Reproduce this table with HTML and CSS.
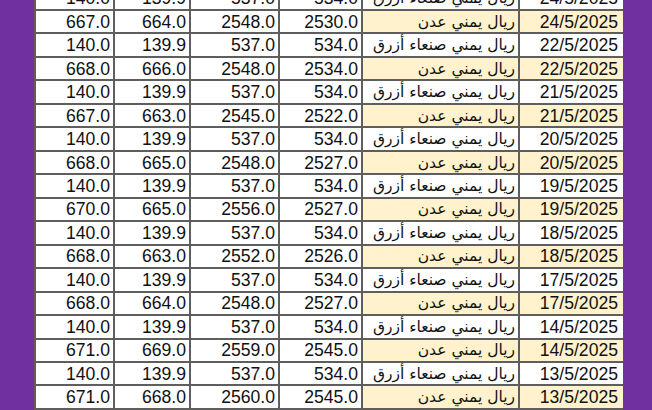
FILE: index.html
```html
<!DOCTYPE html>
<html lang="ar">
<head>
<meta charset="utf-8">
<link rel="stylesheet" href="styles.css">
</head>
<body>
<div class="frame">
  <div class="side side-left"></div>
  <div class="sheet">
    <table class="rates">
      <colgroup>
        <col class="c1"><col class="c2"><col class="c3"><col class="c4"><col class="c5"><col class="c6">
      </colgroup>
      <tbody>
        <tr class="san"><td>140.0</td><td>139.9</td><td>537.0</td><td>534.0</td><td class="name">ريال يمني صنعاء أزرق</td><td class="date">24/5/2025</td></tr>
        <tr class="aden"><td>667.0</td><td>664.0</td><td>2548.0</td><td>2530.0</td><td class="name">ريال يمني عدن</td><td class="date">24/5/2025</td></tr>
        <tr class="san"><td>140.0</td><td>139.9</td><td>537.0</td><td>534.0</td><td class="name">ريال يمني صنعاء أزرق</td><td class="date">22/5/2025</td></tr>
        <tr class="aden"><td>668.0</td><td>666.0</td><td>2548.0</td><td>2534.0</td><td class="name">ريال يمني عدن</td><td class="date">22/5/2025</td></tr>
        <tr class="san"><td>140.0</td><td>139.9</td><td>537.0</td><td>534.0</td><td class="name">ريال يمني صنعاء أزرق</td><td class="date">21/5/2025</td></tr>
        <tr class="aden"><td>667.0</td><td>663.0</td><td>2545.0</td><td>2522.0</td><td class="name">ريال يمني عدن</td><td class="date">21/5/2025</td></tr>
        <tr class="san"><td>140.0</td><td>139.9</td><td>537.0</td><td>534.0</td><td class="name">ريال يمني صنعاء أزرق</td><td class="date">20/5/2025</td></tr>
        <tr class="aden"><td>668.0</td><td>665.0</td><td>2548.0</td><td>2527.0</td><td class="name">ريال يمني عدن</td><td class="date">20/5/2025</td></tr>
        <tr class="san"><td>140.0</td><td>139.9</td><td>537.0</td><td>534.0</td><td class="name">ريال يمني صنعاء أزرق</td><td class="date">19/5/2025</td></tr>
        <tr class="aden"><td>670.0</td><td>665.0</td><td>2556.0</td><td>2527.0</td><td class="name">ريال يمني عدن</td><td class="date">19/5/2025</td></tr>
        <tr class="san"><td>140.0</td><td>139.9</td><td>537.0</td><td>534.0</td><td class="name">ريال يمني صنعاء أزرق</td><td class="date">18/5/2025</td></tr>
        <tr class="aden"><td>668.0</td><td>663.0</td><td>2552.0</td><td>2526.0</td><td class="name">ريال يمني عدن</td><td class="date">18/5/2025</td></tr>
        <tr class="san"><td>140.0</td><td>139.9</td><td>537.0</td><td>534.0</td><td class="name">ريال يمني صنعاء أزرق</td><td class="date">17/5/2025</td></tr>
        <tr class="aden"><td>668.0</td><td>664.0</td><td>2548.0</td><td>2527.0</td><td class="name">ريال يمني عدن</td><td class="date">17/5/2025</td></tr>
        <tr class="san"><td>140.0</td><td>139.9</td><td>537.0</td><td>534.0</td><td class="name">ريال يمني صنعاء أزرق</td><td class="date">14/5/2025</td></tr>
        <tr class="aden"><td>671.0</td><td>669.0</td><td>2559.0</td><td>2545.0</td><td class="name">ريال يمني عدن</td><td class="date">14/5/2025</td></tr>
        <tr class="san"><td>140.0</td><td>139.9</td><td>537.0</td><td>534.0</td><td class="name">ريال يمني صنعاء أزرق</td><td class="date">13/5/2025</td></tr>
        <tr class="aden"><td>671.0</td><td>668.0</td><td>2560.0</td><td>2545.0</td><td class="name">ريال يمني عدن</td><td class="date">13/5/2025</td></tr>
      </tbody>
    </table>
  </div>
  <div class="side side-right"></div>
</div>
</body>
</html>
```

FILE: styles.css
```css
html, body {
  margin: 0;
  padding: 0;
  background: #7030a0;
  overflow: hidden;
}

.frame {
  display: flex;
  width: 652px;
  height: 410px;
  overflow: hidden;
}

.side {
  background: #7030a0;
}

.side-left {
  width: 34px;
  flex: none;
}

.side-right {
  flex: 1;
}

.sheet {
  flex: none;
  width: 589px;
}

.rates {
  border-collapse: collapse;
  table-layout: fixed;
  width: 589px;
  margin-top: -14.5px;
  font-family: "Liberation Sans", Arial, sans-serif;
  font-size: 17.6px;
  color: #111;
  background: #fff;
}

.c1 { width: 79px; }
.c2 { width: 76px; }
.c3 { width: 89px; }
.c4 { width: 83px; }
.c5 { width: 157px; }
.c6 { width: 105px; }

.rates td {
  border: 2px solid #5e5e5e;
  height: 21.47px;
  padding: 0 3px 0 0;
  text-align: right;
  line-height: 20px;
  white-space: nowrap;
  overflow: hidden;
}

.rates td.name {
  font-family: "DejaVu Sans", "Liberation Sans", sans-serif;
  font-size: 15.5px;
  padding-right: 3px;
  direction: rtl;
  text-align: right;
  overflow: hidden;
  text-overflow: clip;
}

.rates td.date {
  padding-right: 5px;
}

.aden td.name,
.aden td.date {
  background: #fff2cc;
}
```
